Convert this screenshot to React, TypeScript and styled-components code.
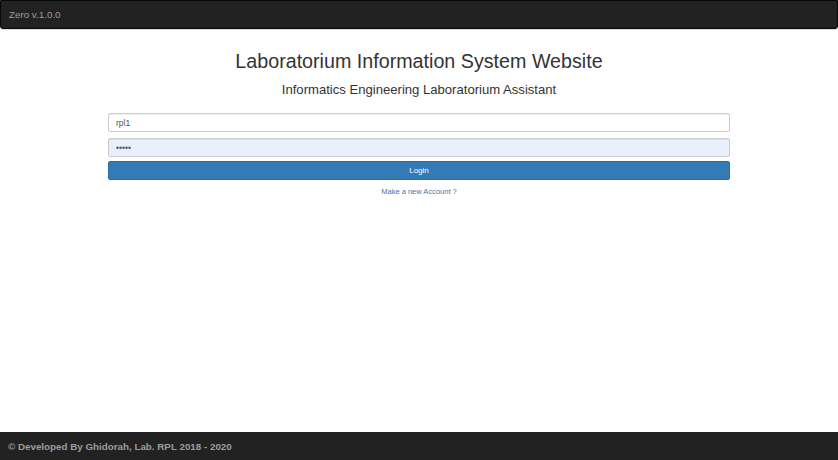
import React from "react";
import styled, { createGlobalStyle } from "styled-components";

const Global = createGlobalStyle`
  html, body { margin: 0; padding: 0; height: 100%; }
  body { font-family: "Liberation Sans", Arial, sans-serif; background: #fff; color: #333; }
  #root { height: 100%; }
`;

const Page = styled.div`
  height: 460px;
  display: flex;
  flex-direction: column;
`;

const NavBar = styled.nav`
  height: 27px;
  background: #222;
  border: 1px solid #080808;
  border-radius: 0 0 3px 3px;
  display: flex;
  align-items: center;
  padding: 0 8px;
  box-shadow: 0 1px 1px rgba(0,0,0,0.15);
`;

const Brand = styled.span`
  color: #9d9d9d;
  font-size: 9.8px;
`;

const Main = styled.main`
  flex: 1;
  display: flex;
  flex-direction: column;
  align-items: center;
  padding: 0 108px;
`;

const Title = styled.h1`
  font-weight: 400;
  font-size: 19.7px;
  margin: 20px 0 0;
  line-height: 24px;
  color: #333;
`;

const Subtitle = styled.h2`
  font-weight: 400;
  font-size: 13.1px;
  margin: 8px 0 0;
  line-height: 18px;
  color: #333;
`;

const Form = styled.form`
  align-self: stretch;
  display: flex;
  flex-direction: column;
  gap: 6px;
  margin-top: 14px;
`;

const Input = styled.input<{ $filled?: boolean }>`
  box-sizing: border-box;
  height: 19px;
  width: 100%;
  border: 1px solid #ccc;
  border-radius: 2px;
  padding: 0 7px;
  font-family: "Liberation Sans", Arial, sans-serif;
  font-size: 8.5px;
  color: #555;
  background: ${p => (p.$filled ? "#e8f0fe" : "#fff")};
  box-shadow: inset 0 1px 1px rgba(0,0,0,0.075);
  outline: none;
`;

const Button = styled.button`
  box-sizing: border-box;
  height: 19px;
  width: 100%;
  margin-top: -2px;
  background: #337ab7;
  border: 1px solid #2e6da4;
  border-radius: 2px;
  color: #fff;
  font-family: "Liberation Sans", Arial, sans-serif;
  font-size: 8px;
`;

const Link = styled.a`
  margin-top: 7px;
  font-size: 7.5px;
  color: #337ab7;
  text-decoration: none;
`;

const Footer = styled.footer`
  height: 28px;
  background: #222;
  display: flex;
  align-items: center;
  padding: 0 8px;
`;

const FooterText = styled.span`
  color: #9d9d9d;
  font-weight: 700;
  font-size: 9.8px;
`;

export default function App() {
  return (
    <>
      <Global />
      <Page>
        <NavBar>
          <Brand>Zero v.1.0.0</Brand>
        </NavBar>
        <Main>
          <Title>Laboratorium Information System Website</Title>
          <Subtitle>Informatics Engineering Laboratorium Assistant</Subtitle>
          <Form onSubmit={e => e.preventDefault()}>
            <Input type="text" defaultValue="rpl1" />
            <Input type="password" defaultValue="12345" $filled />
            <Button type="submit">Login</Button>
          </Form>
          <Link href="#">Make a new Account ?</Link>
        </Main>
        <Footer>
          <FooterText>© Developed By Ghidorah, Lab. RPL 2018 - 2020</FooterText>
        </Footer>
      </Page>
    </>
  );
}
